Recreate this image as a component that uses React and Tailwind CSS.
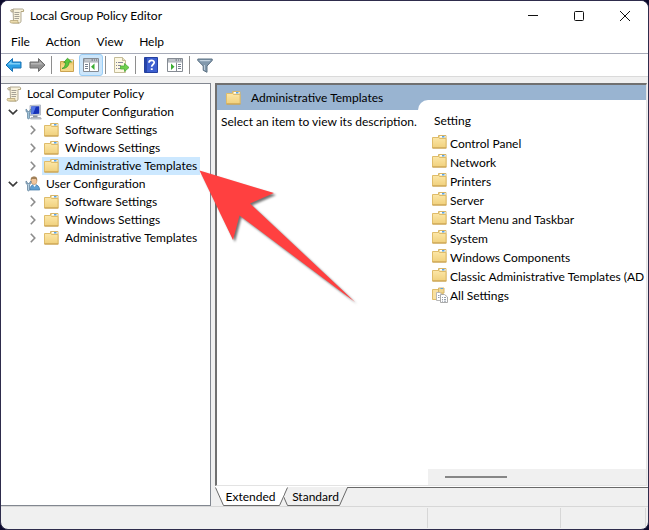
import React, { useState } from "react";

function FolderIcon() {
  return (
    <svg width="15" height="14" viewBox="0 0 15 14" aria-hidden="true" className="shrink-0">
      <defs>
        <linearGradient id="folderFront" x1="0" y1="0" x2="0" y2="1">
          <stop offset="0" stopColor="#fce7a8" />
          <stop offset="1" stopColor="#f0d07c" />
        </linearGradient>
      </defs>
      <path d="M6.500 3V.5h7.500v12h-3z" fill="#f3dc97" stroke="#d6b568" strokeWidth="1" />
      <path d="M8 1h5.500v1.500H8z" fill="#fff" />
      <path d="M10 1h2.500v1.500H10z" fill="#5aa6ea" />
      <path d="M.5 2.500h6l1 1h6.500v9.500H.5z" fill="url(#folderFront)" stroke="#dfbc6a" strokeWidth="1" />
      <path d="M.5 13H14.500" stroke="#c49b4a" />
    </svg>
  );
}

function ScrollIcon() {
  return (
    <svg width="16" height="16" viewBox="0 0 16 16" aria-hidden="true" className="shrink-0">
      <path d="M4 1h9.500c1.500 0 1.500 2.500 0 2.500H12V13c0 1.500-1 2-2 2H3.500L4.500 13z" fill="#f8f2dc" stroke="#a89f88" strokeWidth=".9" />
      <path d="M2.500 1.500C1 2 1.500 4 3 4h1V1.500z" fill="#ded5b4" stroke="#a89f88" strokeWidth=".8" />
      <path d="M1.500 12.500h7.500c-.5 1.500 0 2.500 1 2.500H2.500C1 15 .8 13.500 1.500 12.500z" fill="#ecdcae" stroke="#b5a577" strokeWidth=".8" />
      <path d="M12 3.500h2.500V2" fill="none" stroke="#b3a67c" />
      <path d="M5.500 4.500h5M5.500 6.500h4.500M5.500 8.500h5M5.500 10.500h4.500" stroke="#8f8c84" strokeWidth=".8" />
    </svg>
  );
}

function ComputerIcon() {
  return (
    <svg width="17" height="16" viewBox="0 0 17 16" aria-hidden="true" className="shrink-0">
      <path d="M5 1.500L15.500 1v10L5 11.500z" fill="#d5dae2" stroke="#a4acba" strokeWidth=".8" />
      <path d="M6.200 2.600L14.300 2.200v7.600L6.200 10.200z" fill="#1631b8" />
      <path d="M6.200 2.600L11 2.400 8 10.100l-1.800.1z" fill="#5376e6" />
      <path d="M8 11.500h4.500v2H8z" fill="#8d95a2" />
      <path d="M6 13.500h9.500l.8 1.500H5.500z" fill="#cdd2da" stroke="#8b929e" strokeWidth=".6" />
      <path d="M1 5v2.500l1.500 1.200V14c0 1.200 2 1.200 2 0V8.700L6 7.500V5L4.800 6v1.500H2.200V6z" fill="#9cc0d8" stroke="#5d7f99" strokeWidth=".7" />
    </svg>
  );
}

function UserIcon() {
  return (
    <svg width="17" height="16" viewBox="0 0 17 16" aria-hidden="true" className="shrink-0">
      <path d="M5 14c0-3.500 1.500-5.500 4.500-5.500s5 2 5.200 5.500z" fill="#5f9fd2" stroke="#3c76a8" strokeWidth=".7" />
      <path d="M8 8.500l1.500 2.500 1.800-2.500z" fill="#fff" />
      <ellipse cx="9" cy="4.800" rx="3" ry="3.700" fill="#efc59c" stroke="#b58455" strokeWidth=".5" />
      <path d="M5.800 4.500C5.300 1 7.500.5 9.200.6c2 0 3.600 1.400 2.800 4.400L11 3C9 3 7.500 2.800 6.900 3z" fill="#a08058" />
      <path d="M1 5v2.500l1.500 1.200V14c0 1.200 2 1.200 2 0V8.700L6 7.500V5L4.800 6v1.500H2.200V6z" fill="#b5cfe0" stroke="#557690" strokeWidth=".7" />
    </svg>
  );
}

function AllSettingsIcon() {
  return (
    <svg width="17" height="16" viewBox="0 0 17 16" aria-hidden="true" className="shrink-0">
      <path d="M.5 2.500h5.500l1 1H11v9H.5z" fill="#f8e0a0" stroke="#dfbc6a" />
      <path d="M6.500 1h5.500v5H6.500z" fill="#f0d690" stroke="#d6b568" />
      <path d="M8.500 1.500h2.500" stroke="#5aa2e6" />
      <path d="M4.500 5.500h3.500l2 2v6H4.500z" fill="#fff" stroke="#b0b0b0" strokeWidth=".9" />
      <path d="M8.500 7.500h4l3 2.500v5.500h-7z" fill="#fff" stroke="#a2a2a2" strokeWidth=".9" />
      <path d="M6 8.500h1.500M6 10.500h1.500M10 10.500h1M12 10.500h2M10 12.500h1M12 12.500h2M10 14.200h1M12 14.200h2" stroke="#8792a2" strokeWidth=".9" />
    </svg>
  );
}

function ArrowIcon({ forward }) {
  return (
    <svg width="17" height="16" viewBox="0 0 17 16" aria-hidden="true">
      {forward ? (
        <>
          <path d="M16 8L9.500 1.500v3.500H1v6h8.500v3.500z" fill="#929292" stroke="#6e6e6e" strokeLinejoin="round" />
          <path d="M2 6h8.500V4L14 7.500H2z" fill="#b5b5b5" />
        </>
      ) : (
        <>
          <path d="M1 8l6.500-6.500v3.500H16v6H7.500v3.500z" fill="#2a9fe4" stroke="#1b73b4" strokeLinejoin="round" />
          <path d="M2.500 7.500L6.500 4v2H15v1.500z" fill="#7fd0f7" />
        </>
      )}
    </svg>
  );
}

function FolderUpIcon() {
  return (
    <svg width="16" height="16" viewBox="0 0 16 16" aria-hidden="true">
      <path d="M1.500 4.500H7l1-1.500h6.500v11.500h-13z" fill="#eecb74" stroke="#cba350" />
      <path d="M2 7.500h12v6.500H2z" fill="#f5d888" />
      <path d="M10 3h4v1.500h-4z" fill="#d9e8f5" />
      <path d="M3 11.500c2.500-1 3.500-3 3.500-6H4.800L8.500 1.200l4 3.800H10c0 4-2.500 6.500-7 6.500z" fill="#5cc73c" stroke="#3a9a2c" strokeWidth=".8" />
    </svg>
  );
}

function ConsoleIcon({ left }) {
  return (
    <svg width="16" height="14" viewBox="0 0 16 14" aria-hidden="true" className="shrink-0">
      <path d="M.5.5h15v13H.5z" fill="#fff" stroke="#858b93" />
      <path d="M1 1h14v3.500H1z" fill="#8d949d" />
      <path d="M1.500 2h7M10 2h1M12 2h1M14 2h1" stroke="#f3f4f6" />
      <path d="M1 4h14" stroke="#dfe2e6" />
      {left ? (
        <>
          <path d="M6.500 4.500v9" stroke="#858b93" />
          <path d="M2 6.500h3M2 8.500h3M2 10.500h3" stroke="#75808f" />
          <path d="M11.500 5.500v6.500L8 8.800z" fill="#3bad31" />
        </>
      ) : (
        <>
          <path d="M9.500 4.500v9" stroke="#858b93" />
          <path d="M11 6.500h3M11 8.500h3M11 10.500h3" stroke="#75808f" />
          <path d="M4 5.500v6.500l3.500-3.200z" fill="#3bad31" />
        </>
      )}
    </svg>
  );
}

function ExportIcon() {
  return (
    <svg width="17" height="16" viewBox="0 0 17 16" aria-hidden="true" className="shrink-0">
      <path d="M1.500.5h8l3 3v12h-11z" fill="#fdf8e2" stroke="#c4bc98" />
      <path d="M9.500.5v3h3" fill="#e6dfbf" stroke="#c4bc98" />
      <path d="M3 5.500h1M5 5.500h5M3 8.500h1M5 8.500h3M3 11.500h1M5 11.500h3" stroke="#85859a" />
      <path d="M7.500 9h4V6.500l4.500 4-4.500 4V12h-4z" fill="#6fd04d" stroke="#4bac38" strokeWidth=".8" />
    </svg>
  );
}

function HelpIcon() {
  return (
    <svg width="14" height="16" viewBox="0 0 14 16" aria-hidden="true">
      <path d="M.5.5h13v15H.5z" fill="#3d5fd0" stroke="#2440a0" />
      <path d="M1 1h2v14H1z" fill="#2745a8" />
      <path d="M5 5.800c0-3.200 5.200-3.200 5.200-.2 0 1.900-2.500 1.900-2.500 4.100" fill="none" stroke="#fff" strokeWidth="1.700" />
      <path d="M6.800 11.200h1.900v1.900H6.800z" fill="#fff" />
    </svg>
  );
}

function FilterIcon() {
  return (
    <svg width="16" height="15" viewBox="0 0 16 15" aria-hidden="true">
      <path d="M.8 1h14.400v1.500L10 8v6.300l-3.800-2V8L.8 2.500z" fill="#8299ad" stroke="#5d7284" strokeLinejoin="round" />
      <path d="M2.500 2h11L12.500 3.200h-9z" fill="#c4d4e1" />
      <path d="M7.500 7v5" stroke="#bccddb" />
    </svg>
  );
}

function Chevron({ open }) {
  return open ? (
    <svg width="10" height="6" viewBox="0 0 10 6" aria-hidden="true">
      <path d="M.8.8L5 4.800 9.200.8" fill="none" stroke="#3a3a3a" strokeWidth="1.600" />
    </svg>
  ) : (
    <svg width="6" height="10" viewBox="0 0 6 10" aria-hidden="true">
      <path d="M.8.8L4.800 5 .8 9.200" fill="none" stroke="#8c8c8c" strokeWidth="1.600" />
    </svg>
  );
}

const children = ["Software Settings", "Windows Settings", "Administrative Templates"];

const branches = [
  { name: "Computer Configuration", Icon: ComputerIcon },
  { name: "User Configuration", Icon: UserIcon },
];

const settings = [
  "Control Panel",
  "Network",
  "Printers",
  "Server",
  "Start Menu and Taskbar",
  "System",
  "Windows Components",
  "Classic Administrative Templates (AD",
  "All Settings",
];

function ToolButton({ label, active, children: icon }) {
  return (
    <button
      type="button"
      aria-label={label}
      className={
        active
          ? "flex h-[22px] w-6 items-center justify-center rounded-[3px] border border-[#99cdf5] bg-[#cce6fb]"
          : "flex h-[22px] w-6 items-center justify-center"
      }
    >
      {icon}
    </button>
  );
}

function Divider() {
  return <span className="ml-[2px] mr-[3px] h-[18px] w-px bg-[#8e8e8e]" />;
}

function PolicyTree({ selected, onSelect }) {
  return (
    <nav aria-label="Console tree" className="w-[210px] shrink-0 overflow-hidden border-t border-r border-b border-[#828790] bg-white pt-px">
      <div className="flex h-[18px] items-center gap-1 pl-[5px]">
        <ScrollIcon />
        <button type="button" className="px-px whitespace-nowrap">Local Computer Policy</button>
      </div>
      <ul>
        {branches.map(({ name, Icon }) => (
          <li key={name}>
            <div className="flex h-[18px] items-center pl-[7px]">
              <button type="button" aria-label={"Collapse " + name} className="flex w-[17px] items-center">
                <Chevron open />
              </button>
              <Icon />
              <button type="button" className="pl-1 whitespace-nowrap">{name}</button>
            </div>
            <ul>
              {children.map((child) => {
                const id = name + "/" + child;
                return (
                  <li key={id} className="flex h-[18px] items-center pl-[29px]">
                    <button type="button" aria-label={"Expand " + child} className="flex h-full w-3 items-center">
                      <Chevron />
                    </button>
                    <button
                      type="button"
                      onClick={() => onSelect(id)}
                      className={
                        selected === id
                          ? "flex h-full items-center gap-[6px] bg-[#cce8ff] pr-[3px] pl-[2px] whitespace-nowrap"
                          : "flex h-full items-center gap-[6px] pr-[3px] pl-[2px] whitespace-nowrap"
                      }
                    >
                      <FolderIcon />
                      {child}
                    </button>
                  </li>
                );
              })}
            </ul>
          </li>
        ))}
      </ul>
    </nav>
  );
}

function DetailsPane() {
  return (
    <section className="flex min-h-0 min-w-0 flex-1 border-t-2 border-r border-b border-l-2 border-t-[#707070] border-r-[#e3e3e3] border-b-[#e3e3e3] border-l-[#707070] bg-[#99b4d1]">
      <div className="flex w-[201px] shrink-0 flex-col">
        <h1 className="flex h-[25px] items-center gap-[10px] pl-[9px] whitespace-nowrap">
          <FolderIcon />
          Administrative Templates
        </h1>
        <p className="flex-1 bg-white pt-1 pl-1 whitespace-nowrap">Select an item to view its description.</p>
      </div>
      <div className="flex min-w-0 flex-1 flex-col bg-[linear-gradient(#99b4d1_25px,#fff_25px)] pt-[15px]">
        <div className="flex min-h-0 flex-1 flex-col overflow-hidden rounded-tl-[10px] bg-white pl-[10px]">
          <div className="flex-1 overflow-hidden pt-[13px]">
            <table className="border-collapse">
              <thead>
                <tr className="h-[21px]">
                  <th scope="col" className="p-0 pl-[6px] text-left align-top font-normal">Setting</th>
                </tr>
              </thead>
              <tbody>
                {settings.map((name) => (
                  <tr key={name} className="h-[19px]">
                    <td className="p-0 pl-1 whitespace-nowrap">
                      <div className="flex h-[19px] items-center">
                        <span className="flex h-full w-[18px] shrink-0 items-start pt-px">
                          {name === "All Settings" ? <AllSettingsIcon /> : <FolderIcon />}
                        </span>
                        {name}
                      </div>
                    </td>
                  </tr>
                ))}
              </tbody>
            </table>
          </div>
          <div className="h-4 shrink-0 bg-[#f0f0f0] pt-[7px] pl-[17px]">
            <div className="h-[2px] w-[62px] bg-[#868686]" />
          </div>
        </div>
      </div>
    </section>
  );
}

function ViewTabs() {
  return (
    <div role="tablist" className="flex h-[19px] shrink-0">
      <button type="button" role="tab" aria-selected="true" className="relative w-[69px]">
        <svg width="73" height="19" viewBox="0 0 73 19" aria-hidden="true" className="absolute top-0 left-0">
          <path d="M0 0h73L64.500 18.500H8.500z" fill="#fff" />
          <path d="M.5.500l8 18h56l5-11" fill="none" stroke="#696969" />
        </svg>
        <span className="relative pl-[2px]">Extended</span>
      </button>
      <button type="button" role="tab" aria-selected="false" className="relative w-[63px]">
        <svg width="65" height="19" viewBox="0 0 65 19" aria-hidden="true" className="absolute top-0 left-0">
          <path d="M3.500.5L-.5 9.500l4 9h52l8-18" fill="#f0f0f0" stroke="#696969" />
        </svg>
        <span className="relative">Standard</span>
      </button>
      <span className="flex-1 border-t border-[#696969]" />
    </div>
  );
}

export default function App() {
  const [selected, setSelected] = useState("Computer Configuration/Administrative Templates");
  return (
    <div className="h-screen bg-[#0c0a2c] font-['Lato','Open_Sans',sans-serif] text-[12px] leading-4 text-black">
      <main className="relative flex h-full flex-col overflow-hidden rounded-lg border border-[#2e2c4c] bg-[#f0f0f0]">
        <header className="flex h-[30px] shrink-0 items-center bg-white pl-2">
          <ScrollIcon />
          <span className="flex-1 pl-[5px]">Local Group Policy Editor</span>
          <button type="button" aria-label="Minimize" className="flex h-full w-[46px] items-center justify-center">
            <svg width="10" height="10" viewBox="0 0 10 10"><path d="M0 4.500h10" stroke="#111" /></svg>
          </button>
          <button type="button" aria-label="Maximize" className="flex h-full w-[46px] items-center justify-center">
            <svg width="10" height="10" viewBox="0 0 10 10"><rect x=".5" y=".5" width="9" height="9" rx="1" fill="none" stroke="#111" /></svg>
          </button>
          <button type="button" aria-label="Close" className="flex h-full w-[46px] items-center justify-center">
            <svg width="10" height="10" viewBox="0 0 10 10"><path d="M0 0l10 10M10 0L0 10" stroke="#111" /></svg>
          </button>
        </header>
        <nav aria-label="Menu bar" className="flex h-[22px] shrink-0 items-center gap-4 bg-white pl-[10px]">
          <button type="button">File</button>
          <button type="button">Action</button>
          <button type="button">View</button>
          <button type="button">Help</button>
        </nav>
        <div role="toolbar" aria-label="Console" className="flex h-6 shrink-0 items-center border-t border-b border-t-[#a7abb8] border-b-[#dadada] bg-white">
          <ToolButton label="Back"><ArrowIcon /></ToolButton>
          <ToolButton label="Forward"><ArrowIcon forward /></ToolButton>
          <Divider />
          <ToolButton label="Up one level"><FolderUpIcon /></ToolButton>
          <ToolButton label="Show console tree" active><ConsoleIcon left /></ToolButton>
          <Divider />
          <ToolButton label="Export list"><ExportIcon /></ToolButton>
          <Divider />
          <ToolButton label="Help"><HelpIcon /></ToolButton>
          <ToolButton label="Show action pane"><ConsoleIcon /></ToolButton>
          <Divider />
          <ToolButton label="Filter"><FilterIcon /></ToolButton>
        </div>
        <div className="flex min-h-0 flex-1 gap-1 pt-[6px]">
          <PolicyTree selected={selected} onSelect={setSelected} />
          <div className="flex min-w-0 flex-1 flex-col">
            <div className="flex min-h-0 flex-1 border-b border-white pr-px">
              <DetailsPane />
            </div>
            <ViewTabs />
          </div>
        </div>
        <footer className="flex h-[23px] shrink-0 justify-end border-t border-[#d7d7d7] pt-px pr-[2px] pb-px">
          <span className="w-[133px] border-l border-[#d7d7d7]" />
          <span className="w-[86px] border-r border-l border-[#d7d7d7]" />
        </footer>
        <svg width="170" height="150" viewBox="0 0 170 150" aria-hidden="true" className="pointer-events-none absolute top-[165px] left-[195px] drop-shadow-[2px_2px_1px_rgba(0,0,0,0.55)]">
          <path d="M3.500 4.500L78 27 54 37.500 159 136 43.500 49.500 37 74z" fill="#ff4040" />
        </svg>
      </main>
    </div>
  );
}
